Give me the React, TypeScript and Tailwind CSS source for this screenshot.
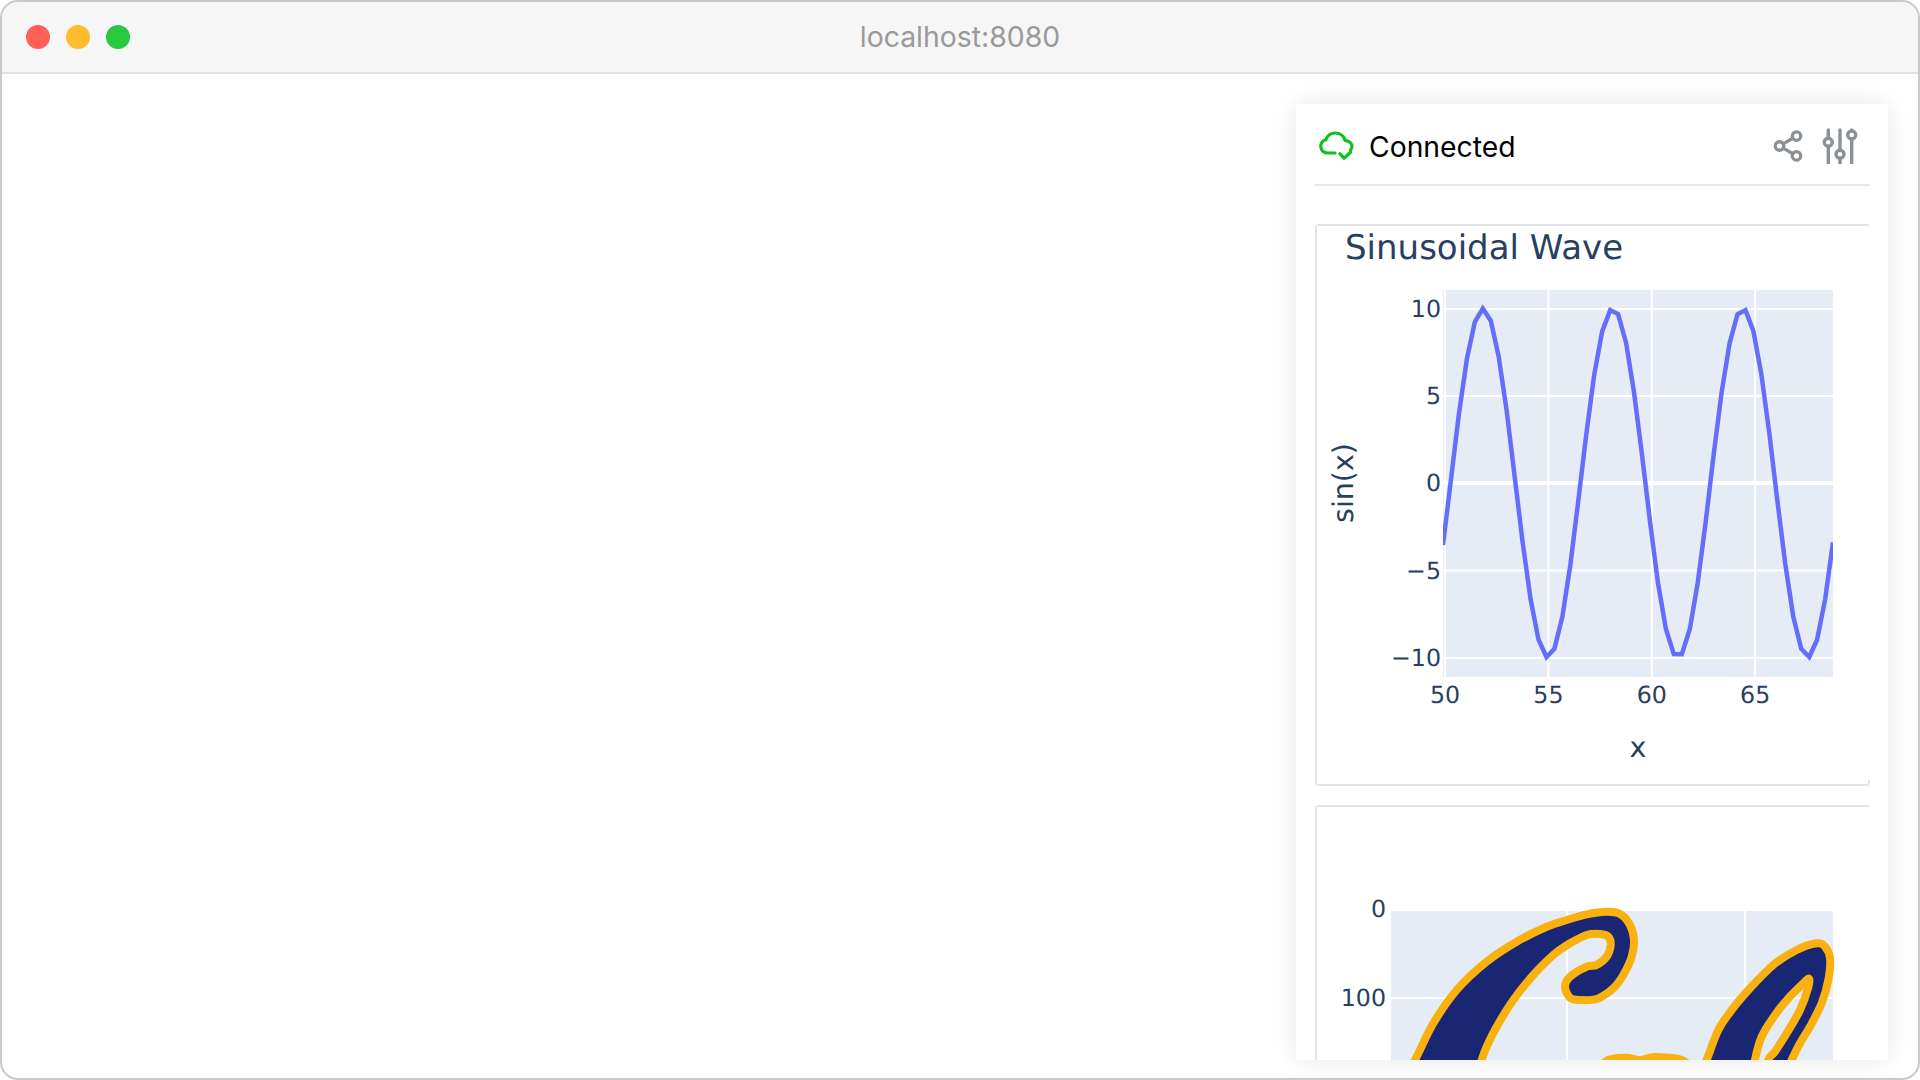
import React from 'react';
import { Share2 } from 'lucide-react';

type Pt = [number, number];

// Catmull-Rom through the traced points, closed
const smooth = (pts: Pt[]) => {
  const n = pts.length;
  let d = `M${pts[0][0].toFixed(1)} ${pts[0][1].toFixed(1)}`;
  for (let i = 0; i < n; i++) {
    const p0 = pts[(i - 1 + n) % n];
    const p1 = pts[i];
    const p2 = pts[(i + 1) % n];
    const p3 = pts[(i + 2) % n];
    const c1 = [p1[0] + (p2[0] - p0[0]) / 6, p1[1] + (p2[1] - p0[1]) / 6];
    const c2 = [p2[0] - (p3[0] - p1[0]) / 6, p2[1] - (p3[1] - p1[1]) / 6];
    d += `C${c1[0].toFixed(1)} ${c1[1].toFixed(1)} ${c2[0].toFixed(1)} ${c2[1].toFixed(1)} ${p2[0].toFixed(1)} ${p2[1].toFixed(1)}`;
  }
  return d + 'Z';
};

const at = (ox: number, oy: number, raw: number[][]): Pt[] => raw.map(([x, y]) => [ox + x / 3, oy + y / 3]);

const swoosh = at(1400, 900, [
  [0, 560], [45, 480], [100, 370], [170, 270], [260, 185], [350, 125], [440, 80], [500, 60], [560, 43], [620, 35],
  [660, 42], [690, 75], [702, 120], [695, 170], [670, 225], [640, 265], [590, 297], [540, 300], [510, 293], [495, 260],
  [510, 230], [560, 200], [590, 195], [620, 170], [632, 135], [625, 110], [600, 102], [560, 105], [510, 130], [460, 165],
  [400, 225], [340, 300], [290, 380], [260, 440], [245, 480], [220, 560],
]);
const lOuter = at(1640, 900, [
  [170, 560], [200, 480], [235, 390], [275, 330], [330, 265], [400, 195], [470, 150], [530, 130], [555, 140], [570, 175],
  [565, 240], [545, 310], [510, 380], [480, 430], [455, 480], [420, 560],
]);
const lHole = at(1640, 900, [
  [335, 560], [345, 480], [365, 410], [405, 345], [445, 295], [490, 250], [507, 236], [505, 262], [480, 330], [440, 400],
  [405, 455], [385, 480], [360, 560],
]);
const midBit = at(1400, 900, [[620, 482], [675, 473], [720, 480], [765, 471], [850, 482], [850, 520], [620, 520]]);

// 10 * sin(x), 50 samples over the visible range
const wave = Array.from({ length: 50 }, (_, i) => {
  const px = 1443 + i * 7.96;
  const py = 483 - 174.4 * Math.cos((2 * Math.PI * (px - 1483)) / 129.9);
  return `${px.toFixed(1)},${py.toFixed(1)}`;
}).join(' ');

const yTicks = [
  { label: '10', y: 309 },
  { label: '5', y: 396 },
  { label: '0', y: 483 },
  { label: '\u22125', y: 570.5 },
  { label: '\u221210', y: 658 },
];
const xTicks = [
  { label: '50', x: 1445 },
  { label: '55', x: 1548.4 },
  { label: '60', x: 1651.8 },
  { label: '65', x: 1755.2 },
];

const SineChart = () => (
  <svg viewBox="1317 226 553 554" textRendering="geometricPrecision" className="relative block h-[554px] w-[553px] -mr-[2px] mb-1 bg-white" fill="#2a3f5f">
    <text x="1345" y="259" fontSize="34">Sinusoidal Wave</text>
    <rect x="1443" y="290" width="390" height="387" fill="#e5ecf6" />
    {xTicks.map((t) => (
      <line key={t.x} x1={t.x} x2={t.x} y1="290" y2="677" stroke="#fff" strokeWidth="2" />
    ))}
    {yTicks.map((t) => (
      <line key={t.y} x1="1443" x2="1833" y1={t.y} y2={t.y} stroke="#fff" strokeWidth={t.label === '0' ? 4 : 2} />
    ))}
    <clipPath id="plot1"><rect x="1443" y="290" width="390" height="387" /></clipPath>
    <polyline points={wave} clipPath="url(#plot1)" fill="none" stroke="#636efa" strokeWidth="4.5" strokeLinejoin="miter" />
    {yTicks.map((t) => (
      <text key={t.y} x="1441" y={t.y + 8} fontSize="23.7" textAnchor="end">{t.label}</text>
    ))}
    {xTicks.map((t) => (
      <text key={t.x} x={t.x} y="703" fontSize="23.7" textAnchor="middle">{t.label}</text>
    ))}
    <text x="1638" y="757" fontSize="28.5" textAnchor="middle">x</text>
    <text transform="translate(1353 483) rotate(-90)" fontSize="28.5" textAnchor="middle">sin(x)</text>
  </svg>
);

const LogoChart = () => (
  <svg viewBox="1317 807 553 253" textRendering="geometricPrecision" className="relative block h-[253px] w-[553px] -mr-[2px] bg-white" fill="#2a3f5f">
    <rect x="1391" y="911" width="442" height="160" fill="#e5ecf6" />
    <line x1="1567" x2="1567" y1="911" y2="1071" stroke="#fff" strokeWidth="2" />
    <line x1="1745" x2="1745" y1="911" y2="1071" stroke="#fff" strokeWidth="2" />
    <line x1="1391" x2="1833" y1="998" y2="998" stroke="#fff" strokeWidth="2" />
    <text x="1386" y="917" fontSize="23.7" textAnchor="end">0</text>
    <text x="1386" y="1006" fontSize="23.7" textAnchor="end">100</text>
    <g stroke="#f8b10e" strokeWidth="8" strokeLinejoin="round">
      <path d={smooth(swoosh)} fill="#192674" />
      <path d={smooth(lOuter) + smooth(lHole)} fill="#192674" fillRule="evenodd" />
      <path d={smooth(midBit)} fill="#192674" />
    </g>
  </svg>
);

const CloudCheckIcon = () => (
  <svg viewBox="0 0 36 30" className="h-[30px] w-[36px]" fill="none" stroke="#0fc01a" strokeWidth="3.2" strokeLinecap="round" strokeLinejoin="round">
    <path d="M17 22H9a6.8 6.8 0 0 1-1-13.4C9.5 4.5 13 2 17 2c5 0 9 3 10 7.4 4 .5 7 3 7 6.1 0 1.3-.5 2.4-1.5 3.4" />
    <path d="M22 22.7l4 4.6 6.7-6.3" />
  </svg>
);

const SlidersIcon = () => (
  <svg viewBox="0 0 36 36" className="h-9 w-9" fill="#fff" stroke="#8b9095" strokeWidth="3.4" strokeLinecap="round">
    <path d="M6.3 2v33M18 2v33M29.7 2v33" />
    <circle cx="6.3" cy="14.3" r="4" />
    <circle cx="18" cy="26.3" r="4" />
    <circle cx="29.7" cy="7" r="4" />
  </svg>
);

const App: React.FC = () => (
  <div className="h-[1080px] w-[1920px] bg-white">
    <div className="flex h-full w-full flex-col overflow-hidden rounded-[18px] border-2 border-[#c9c9c9] bg-white">
      <header className="relative flex h-[72px] shrink-0 items-center border-b-2 border-[#e2e2e2] bg-[#f6f6f6] pl-[24px]">
        <div className="flex gap-4">
          <span className="h-6 w-6 rounded-full bg-[#ff5f57]" />
          <span className="h-6 w-6 rounded-full bg-[#febc2e]" />
          <span className="h-6 w-6 rounded-full bg-[#28c840]" />
        </div>
        <span className="absolute inset-x-0 text-center font-['Inter',sans-serif] text-[28.4px] text-[#9a9a9a]">localhost:8080</span>
      </header>
      <main className="flex flex-1 justify-end pr-[30px] pt-[30px] pb-[18px]">
        <aside className="flex h-[956px] w-[592px] flex-col overflow-hidden rounded bg-white pl-[19px] pr-[18px] font-['DejaVu_Sans',sans-serif] shadow-[0_0_28px_rgba(0,0,0,0.1)]">
          <div className="flex h-[82px] shrink-0 items-center border-b-2 border-[#e5e7eb] pt-1">
            <div className="ml-[3px] flex items-center">
              <CloudCheckIcon />
              <span className="ml-[15px] mt-[2px] font-['Inter',sans-serif] text-[28.3px] text-black">Connected</span>
            </div>
            <div className="ml-auto mr-[12px] flex items-center gap-[17px]">
              <Share2 size={34} color="#8b9095" strokeWidth={2.3} />
              <SlidersIcon />
            </div>
          </div>
          <section className="mt-[38px] shrink-0 rounded-[4px] border-2 border-[#e0e3e8]">
            <SineChart />
          </section>
          <section className="mt-[19px] h-[400px] shrink-0 rounded-[4px] border-2 border-[#e0e3e8]">
            <LogoChart />
          </section>
        </aside>
      </main>
    </div>
  </div>
);

export default App;
